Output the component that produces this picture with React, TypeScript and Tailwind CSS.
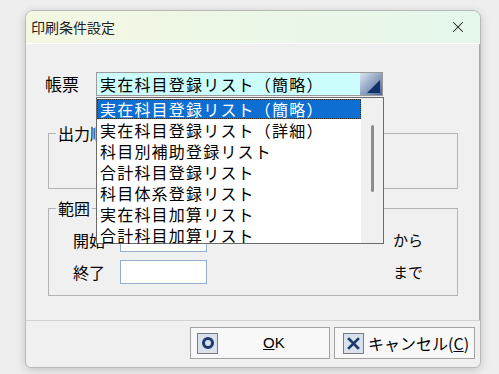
import { X } from 'lucide-react';

const items = [
  '実在科目登録リスト（簡略）',
  '実在科目登録リスト（詳細）',
  '科目別補助登録リスト',
  '合計科目登録リスト',
  '科目体系登録リスト',
  '実在科目加算リスト',
  '合計科目加算リスト',
];

const jp = "font-['Noto_Sans_CJK_JP',sans-serif]";

function ComboBox() {
  return (
    <div className="relative">
      <div className="flex h-[24px] w-[287px] border border-[#9a9a9a]">
        <div className="flex-1 bg-[#cbfdfd] pl-[3px] text-[16px] leading-[22px] tracking-[1.2px] text-black">
          {items[0]}
        </div>
        <div className="relative w-[22px] bg-gradient-to-br from-[#dfe5ee] to-[#4a679c]">
          <svg className="absolute right-[2px] bottom-[2px]" width="13" height="13" viewBox="0 0 13 13">
            <polygon points="13,0 13,13 0,13" fill="#12306a" />
          </svg>
        </div>
      </div>

      {/* open dropdown list */}
      <div className="absolute left-0 top-[25px] z-10 flex h-[147px] w-[288px] border border-[#6a6a6a] bg-white">
        <div className="flex-1 pt-[1px]">
          {items.map((it, i) => (
            <div
              key={it}
              className={
                i === 0
                  ? 'mb-[1px] h-[20px] border border-dotted border-[#333] bg-[#0f6ed2] pl-[2px] text-[16px] leading-[18px] tracking-[1.2px] text-white'
                  : 'h-[21px] pl-[3px] text-[16px] leading-[21px] tracking-[1.2px] text-black'
              }
            >
              {it}
            </div>
          ))}
        </div>
        <div className="flex w-[22px] justify-center bg-[#f0f0f0] pt-[27px]">
          <div className="h-[67px] w-[3px] rounded-full bg-[#8c8c8c]" />
        </div>
      </div>
    </div>
  );
}

function DateRow({ label, suffix }: { label: string; suffix: string }) {
  return (
    <div className="flex h-[24px] items-center">
      <span className="box-content w-[47px] whitespace-nowrap pl-[24px] text-[16px] leading-[24px]">{label}</span>
      <div className="h-[24px] w-[87px] border border-[#94aecb] bg-white" />
      <span className="ml-[186px] text-[15px] leading-[24px]">{suffix}</span>
    </div>
  );
}

export default function App() {
  return (
    <div className={`h-[374px] w-[499px] bg-[#eeeeee] pl-[25px] pt-[10px] ${jp} text-black`}>
      <div className="flex h-[358px] w-[456px] flex-col overflow-hidden rounded-t-[8px] rounded-b-[6px] border border-[#b9b9b9] bg-[#f0f0f0] shadow-[0_2px_10px_rgba(0,0,0,0.18)]">
        {/* title bar */}
        <div className="flex h-[33px] shrink-0 items-center justify-between border-b border-white bg-gradient-to-r from-[#f4f8e2] to-[#e4f7eb] pl-[5px] pr-[13px]">
          <span className="text-[14px] leading-[18px] text-[#222]">印刷条件設定</span>
          <X size={18} strokeWidth={1.4} className="text-[#222]" />
        </div>

        {/* body */}
        <div className="flex h-[276px] shrink-0 flex-col border-r border-[#a8a8a8]">
          <div className="mt-[28px] flex items-center pl-[19px]">
            <span className="w-[51px] text-[17px] leading-[24px]">帳票</span>
            <ComboBox />
          </div>

          <fieldset className="ml-[22px] mt-[28px] h-[65px] w-[410px] border border-[#b3b3b3] px-0 pb-0">
            <legend className="ml-[7px] px-[2px] text-[16px] leading-[18px]">出力順</legend>
          </fieldset>

          <fieldset className="ml-[22px] mt-[10px] w-[410px] border border-[#b3b3b3] px-0 pb-[11px] pt-[11px]">
            <legend className="ml-[7px] px-[2px] text-[16px] leading-[18px]">範囲</legend>
            <div className="flex flex-col gap-[8px]">
              <DateRow label="開始" suffix="から" />
              <DateRow label="終了" suffix="まで" />
            </div>
          </fieldset>
        </div>

        {/* footer */}
        <div className="flex flex-1 justify-end gap-[4px] border-t border-[#d2d2d2] pr-[5px] pt-[6px]">
          <button className="flex h-[32px] w-[140px] items-center border border-[#a3a3a3] bg-[#f8f8f8] pl-[6px]">
            <span className="flex h-[21px] w-[21px] items-center justify-center border border-[#7b7b7b] bg-[#d9e1ec]">
              <span className="h-[12px] w-[12px] rounded-full border-[3px] border-[#1c3a6e]" />
            </span>
            <span className="ml-[45px] font-['Liberation_Sans',sans-serif] text-[15px] leading-[20px]">
              <u>O</u>K
            </span>
          </button>
          <button className="flex h-[32px] w-[141px] items-center border border-[#a3a3a3] bg-[#f8f8f8] pl-[8px]">
            <span className="flex h-[21px] w-[21px] items-center justify-center border border-[#7b7b7b] bg-[#d9e1ec]">
              <svg width="13" height="13" viewBox="0 0 13 13">
                <path d="M2 2 L11 11 M11 2 L2 11" stroke="#1c3a6e" strokeWidth="2.6" strokeLinecap="square" />
              </svg>
            </span>
            <span className="ml-[4px] whitespace-nowrap text-[16px] leading-[20px]">
              キャンセル(<u>C</u>)
            </span>
          </button>
        </div>
      </div>
    </div>
  );
}
